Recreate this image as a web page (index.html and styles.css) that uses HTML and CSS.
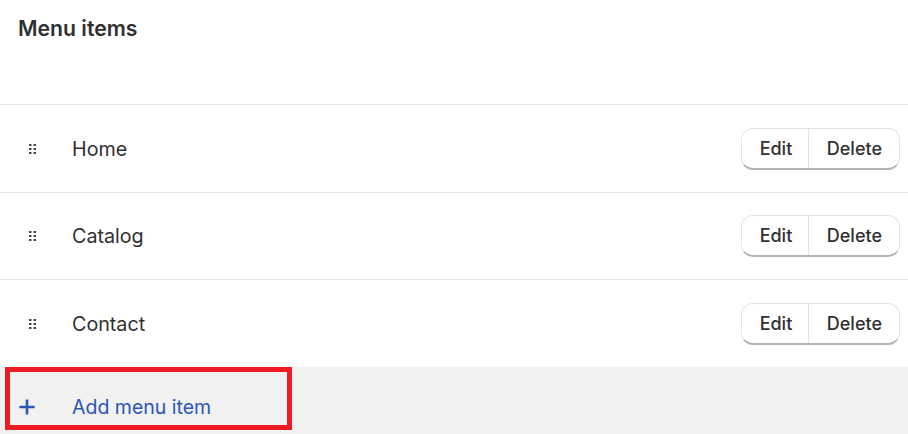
FILE: index.html
```html
<!DOCTYPE html>
<html lang="en">
<head>
<meta charset="utf-8">
<title>Menu items</title>
<link rel="stylesheet" href="styles.css">
</head>
<body>
<main class="panel">
  <h2 class="title">Menu items</h2>
  <ul class="list">
    <li class="row">
      <svg class="grip" viewBox="0 0 7 10" aria-hidden="true"><path d="M0 0h2.500v2H0zM4.500 0H7v2H4.500zM0 4h2.500v2H0zM4.500 4H7v2H4.500zM0 8h2.500v2H0zM4.500 8H7v2H4.500z"/></svg>
      <span class="label">Home</span>
      <div class="actions"><button class="btn">Edit</button><button class="btn">Delete</button></div>
    </li>
    <li class="row">
      <svg class="grip" viewBox="0 0 7 10" aria-hidden="true"><path d="M0 0h2.500v2H0zM4.500 0H7v2H4.500zM0 4h2.500v2H0zM4.500 4H7v2H4.500zM0 8h2.500v2H0zM4.500 8H7v2H4.500z"/></svg>
      <span class="label">Catalog</span>
      <div class="actions"><button class="btn">Edit</button><button class="btn">Delete</button></div>
    </li>
    <li class="row">
      <svg class="grip" viewBox="0 0 7 10" aria-hidden="true"><path d="M0 0h2.500v2H0zM4.500 0H7v2H4.500zM0 4h2.500v2H0zM4.500 4H7v2H4.500zM0 8h2.500v2H0zM4.500 8H7v2H4.500z"/></svg>
      <span class="label">Contact</span>
      <div class="actions"><button class="btn">Edit</button><button class="btn">Delete</button></div>
    </li>
  </ul>
  <div class="add">
    <svg class="plus" viewBox="0 0 16 16" aria-hidden="true"><path d="M6.700.400h2.600v6.300h6.300v2.600H9.300v6.300H6.700V9.300H.400V6.700h6.300z"/></svg>
    <span class="add-label">Add menu item</span>
    <div class="highlight"></div>
  </div>
</main>
</body>
</html>
```
FILE: styles.css
```css
* { box-sizing: border-box; }
html, body { margin: 0; height: 100%; background: #fff; }
body { font-family: Inter, "Liberation Sans", sans-serif; color: #303030; overflow: hidden; }
.panel { width: 908px; height: 434px; display: flex; flex-direction: column; }
.title { margin: 0; height: 104px; padding: 15px 18px 0; font-size: 21.2px; line-height: 26px; font-weight: 600; }
.list { list-style: none; margin: 0; padding: 0; }
.row { height: 87.5px; display: flex; align-items: center; border-top: 1px solid #e8e8e8; padding: 1px 8px 0 29px; }
.grip { width: 7px; height: 10px; fill: #4a4a4a; flex: none; }
.label { margin-left: 36px; font-size: 19.7px; flex: 1; }
.actions { display: flex; height: 42px; border: 1px solid #e3e3e3; border-bottom: 2px solid #b5b5b5; border-radius: 12px; overflow: hidden; background: #fff; }
.btn { font: 500 18px Inter, "Liberation Sans", sans-serif; color: #303030; background: none; border: 0; padding: 0 16px 0 17.500px; }
.btn + .btn { border-left: 1px solid #e3e3e3; padding: 0 17px 0 17.500px; }
.add { position: relative; flex: 1; background: #f1f1f1; display: flex; align-items: center; padding: 14px 0 0 19px; }
.plus { width: 16px; height: 16px; fill: #2c55b8; flex: none; }
.add-label { margin-left: 37px; font-size: 19.5px; color: #2c55b8; }
.highlight { position: absolute; left: 5px; top: 0; width: 287px; height: 63px; border: 5px solid #ed1c24; }
```
